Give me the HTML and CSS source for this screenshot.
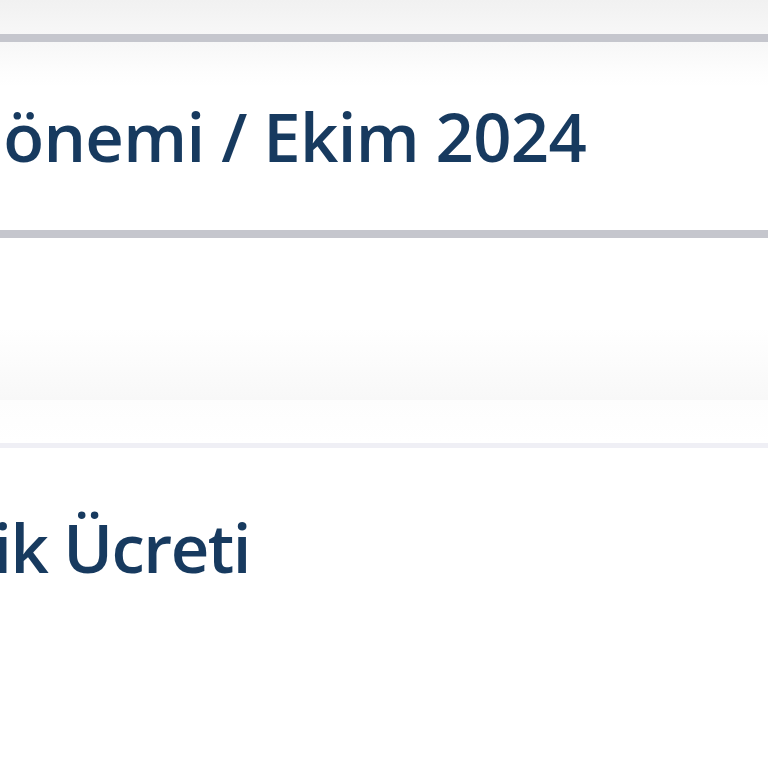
FILE: index.html
```html
<!DOCTYPE html>
<html lang="tr">
<head>
<meta charset="utf-8">
<title>Fatura</title>
<link rel="stylesheet" href="styles.css">
</head>
<body>
<main class="page">
  <div class="top-band"></div>
  <div class="rule"></div>
  <header class="title-row">
    <h1 class="title">Fatura Dönemi / Ekim 2024</h1>
  </header>
  <div class="rule"></div>
  <div class="spacer"></div>
  <div class="gap"></div>
  <div class="thin-rule"></div>
  <section class="item-row">
    <span class="item-label">Abonelik Ücreti</span>
  </section>
</main>
</body>
</html>
```
FILE: styles.css
```css
html, body {
  margin: 0;
  padding: 0;
  background: #ffffff;
}
.page {
  width: 768px;
  height: 768px;
  overflow: hidden;
  display: flex;
  flex-direction: column;
  font-family: "Open Sans", "Noto Sans", sans-serif;
  color: #173a5f;
}
.top-band {
  height: 34px;
  background: linear-gradient(#f1f1f1, #f7f7f7);
  flex: none;
}
.rule {
  height: 8px;
  flex: none;
  background: #c5c6cd;
  box-shadow: 0 1px 0 #e2e4ef;
}
.title-row {
  height: 188px;
  flex: none;
  display: flex;
  justify-content: flex-end;
  padding-right: 182px;
  background: linear-gradient(#f7f7f7 0px, #fdfdfd 30px, #ffffff 45px);
}
.title {
  margin: 0;
  white-space: nowrap;
  font-size: 67px;
  font-weight: 600;
  line-height: 188px;
  letter-spacing: -0.7px;
}
.spacer {
  height: 162px;
  flex: none;
  background: linear-gradient(#ffffff 0px, #ffffff 90px, #f8f8f8 162px);
}
.gap {
  height: 43px;
  flex: none;
  background: linear-gradient(#fdfdfd, #ffffff);
}
.thin-rule {
  height: 5px;
  flex: none;
  background: #efeff5;
}
.item-row {
  height: 198px;
  flex: none;
  display: flex;
  justify-content: flex-end;
  padding-right: 518px;
}
.item-label {
  white-space: nowrap;
  font-size: 67px;
  font-weight: 600;
  line-height: 198px;
  letter-spacing: -1.5px;
}
```
